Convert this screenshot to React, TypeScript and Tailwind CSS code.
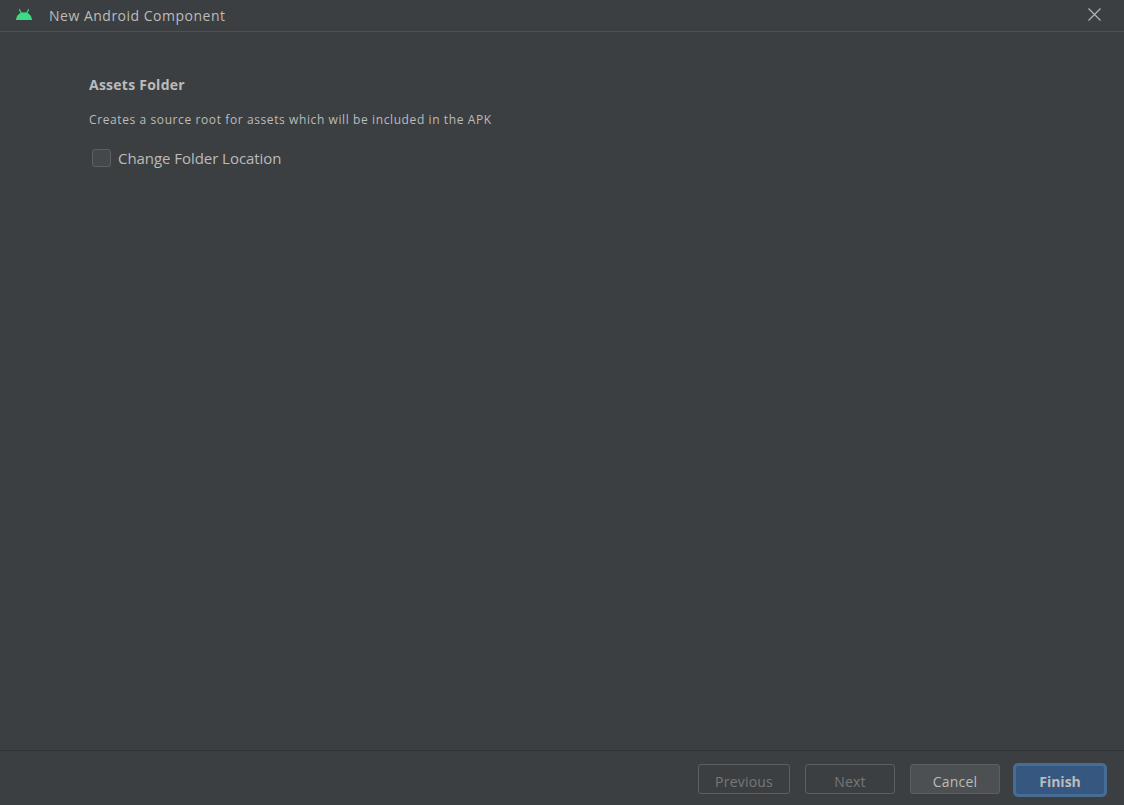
export default function App() {
  const btn = "h-[30px] rounded-[3px] border flex items-center justify-center text-[14px] pt-[4px] tracking-[0.2px]";
  return (
    <div className="w-[1124px] h-[805px] bg-[#3c3f41] flex flex-col overflow-hidden text-[#bbbbbb] font-['Open_Sans','Noto_Sans',sans-serif]">
      <header className="h-[32px] shrink-0 border-b border-[#515151] flex items-center pl-[16px] pr-[23px]">
        <svg width="16" height="11" viewBox="0 0 16 11" className="mb-[3px]" fill="#3ddc84">
          <path d="M0 11C0.3 6.5 3.6 3.2 8 3.2S15.7 6.5 16 11Z" />
          <path d="M3.2 0.3L5.4 4.2M12.8 0.3L10.6 4.2" stroke="#3ddc84" strokeWidth="1.2" />
        </svg>
        <span className="ml-[17px] text-[14px] leading-none tracking-[0.5px]">New Android Component</span>
        <svg width="13" height="13" viewBox="0 0 13 13" className="ml-auto mb-[3px]" stroke="#b4b4b4" strokeWidth="1.2" fill="none">
          <path d="M0.5 0.5L12.5 12.5M12.5 0.5L0.5 12.5" />
        </svg>
      </header>
      <main className="flex-1 pl-[89px] pt-[44px]">
        <h1 className="text-[14px] leading-[18px] font-bold tracking-[0.25px]">Assets Folder</h1>
        <p className="mt-[18px] text-[12px] leading-[16px] tracking-[0.6px]">Creates a source root for assets which will be included in the APK</p>
        <label className="mt-[20px] ml-[3px] flex items-center gap-[8px]">
          <span className="w-[19px] h-[18px] rounded-[3px] border border-[#5e6060] bg-[#43494a]" />
          <span className="text-[15px] leading-[20px] tracking-[-0.05px] -ml-[1px]">Change Folder Location</span>
        </label>
      </main>
      <footer className="h-[55px] shrink-0 border-t border-[#323232] flex items-start pt-[13px] pl-[698px]">
        <div className={`${btn} w-[92px] border-[#5e6060] text-[#777777]`}>Previous</div>
        <div className={`${btn} w-[90px] ml-[15px] border-[#5e6060] text-[#777777]`}>Next</div>
        <div className={`${btn} w-[90px] ml-[15px] border-[#5e6060] bg-[#4c5052]`}>Cancel</div>
        <div className={`${btn} w-[94px] ml-[13px] -mt-[1px] h-[34px] rounded-[5px] border-[3px] border-[#466d94] bg-[#365880] font-bold !tracking-normal !pt-[3px]`}>Finish</div>
      </footer>
    </div>
  );
}
